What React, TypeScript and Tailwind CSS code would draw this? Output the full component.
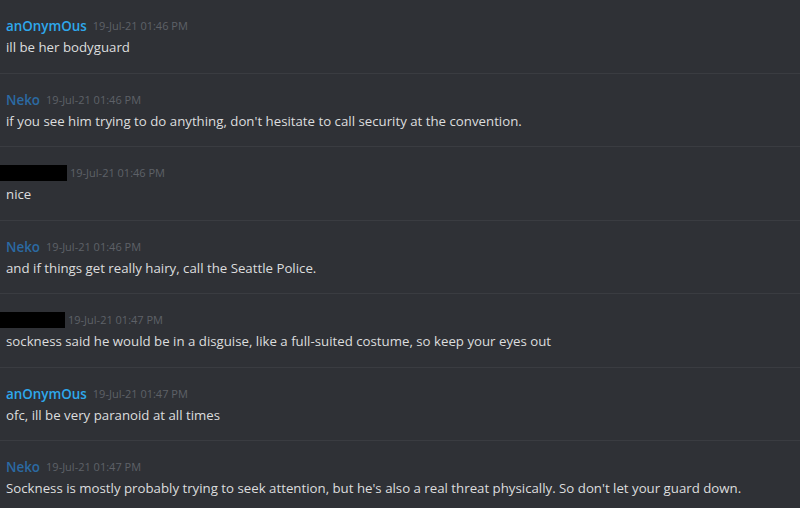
const messages = [
  { name: "anOnymOus", color: "text-[#2ea8ec]", time: "19-Jul-21 01:46 PM", text: "ill be her bodyguard" },
  { name: "Neko", color: "text-[#2b6aa3]", time: "19-Jul-21 01:46 PM", text: "if you see him trying to do anything, don't hesitate to call security at the convention." },
  { name: null, redact: "w-[67px]", time: "19-Jul-21 01:46 PM", text: "nice" },
  { name: "Neko", color: "text-[#2b6aa3]", time: "19-Jul-21 01:46 PM", text: "and if things get really hairy, call the Seattle Police." },
  { name: null, redact: "w-[65px]", time: "19-Jul-21 01:47 PM", text: "sockness said he would be in a disguise, like a full-suited costume, so keep your eyes out" },
  { name: "anOnymOus", color: "text-[#2ea8ec]", time: "19-Jul-21 01:47 PM", text: "ofc, ill be very paranoid at all times" },
  { name: "Neko", color: "text-[#2b6aa3]", time: "19-Jul-21 01:47 PM", text: "Sockness is mostly probably trying to seek attention, but he's also a real threat physically. So don't let your guard down." },
];

type Msg = (typeof messages)[number];

function Message({ m }: { m: Msg }) {
  return (
    <div className="h-[73.5px] shrink-0 border-b border-[#3a3c41] pt-[17px]">
      <div className="flex items-center h-[18px]">
        {m.name ? (
          <span className={`pl-[6px] text-[13.4px] font-semibold leading-[18px] ${m.color}`}>{m.name}</span>
        ) : (
          <span className={`h-[16px] bg-black ${m.redact}`} />
        )}
        <span className={`${m.name ? "ml-[6px]" : "ml-[3px]"} text-[11px] text-[#5e6168] leading-[18px]`}>{m.time}</span>
      </div>
      <div className="pl-[6px] mt-[2px] text-[13.25px] leading-[20px] text-[#dcddde]">{m.text}</div>
    </div>
  );
}

export default function App() {
  return (
    <div
      className="w-[800px] h-[508px] overflow-hidden bg-[#2f3136] flex flex-col"
      style={{ fontFamily: '"Open Sans", "Noto Sans", sans-serif' }}
    >
      {messages.map((m, i) => (
        <Message key={i} m={m} />
      ))}
    </div>
  );
}
